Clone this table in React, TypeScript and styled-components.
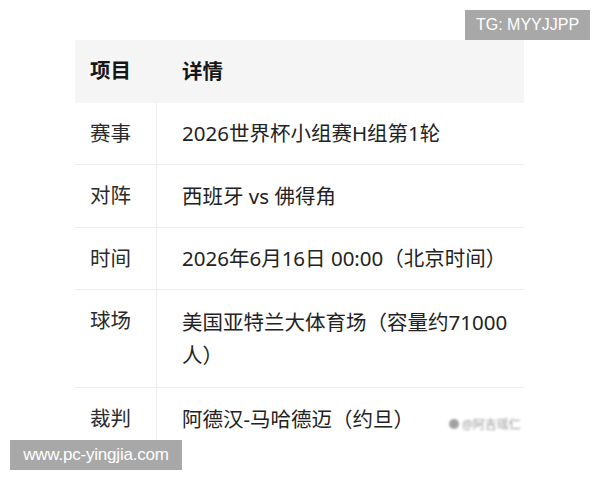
import React from 'react';
import styled, { createGlobalStyle, css } from 'styled-components';

const GlobalStyle = createGlobalStyle`
    html, body {
        margin: 0;
        padding: 0;
        background: #ffffff;
    }
    body {
        font-family: "Noto Sans", "Noto Sans CJK SC", sans-serif;
        color: #222222;
    }
`;

const Page = styled.div`
    position: relative;
    width: 600px;
    height: 480px;
    overflow: hidden;
    padding: 40px 0 0 75px;
    box-sizing: border-box;
`;

const Table = styled.div`
    width: 449px;
    display: grid;
    grid-template-columns: 82px 1fr;
`;

const Cell = styled.div<{ head?: boolean; label?: boolean }>`
    display: flex;
    align-items: center;
    box-sizing: border-box;
    min-height: 62px;
    padding: 14px 14px 14px 25px;
    font-size: 20.5px;
    line-height: 33px;
    color: #222222;
    border-bottom: 1px solid #eeeeee;

    &:nth-last-child(-n + 2) {
        border-bottom: none;
    }

    ${props =>
        props.label &&
        css`
            padding-left: 15px;
            padding-right: 0;
            align-items: flex-start;
            border-right: 1px solid #eeeeee;
            color: #2a2a2a;
        `}

    ${props =>
        props.head &&
        css`
            background: #f5f5f5;
            font-weight: 700;
            color: #161616;
            min-height: 63px;
            border-right: none;
            border-bottom: none;
        `}
`;

const Badge = styled.div<{ corner: 'top' | 'bottom' }>`
    position: absolute;
    background: #a8a8a8;
    color: #ffffff;
    font-family: "Liberation Sans", Arial, sans-serif;
    display: flex;
    align-items: center;
    justify-content: center;
    height: 30px;

    ${props =>
        props.corner === 'top'
            ? css`
                  top: 10px;
                  right: 10px;
                  width: 125px;
                  font-size: 16px;
              `
            : css`
                  left: 10px;
                  top: 440px;
                  width: 172px;
                  font-size: 17px;
                  letter-spacing: -0.2px;
              `}
`;

const Stamp = styled.div`
    position: absolute;
    left: 449px;
    top: 415px;
    display: flex;
    align-items: center;
    gap: 3px;
    font-size: 12px;
    color: #9a9a9a;
    filter: blur(0.9px);
`;

const StampDot = styled.span`
    width: 10px;
    height: 10px;
    border-radius: 50%;
    background: #a0a0a0;
`;

const rows = [
    { label: '赛事', value: '2026世界杯小组赛H组第1轮', height: 59 },
    { label: '对阵', value: '西班牙 vs 佛得角', height: 63 },
    { label: '时间', value: '2026年6月16日 00:00（北京时间）', height: 62 },
    { label: '球场', value: '美国亚特兰大体育场（容量约71000人）', height: 98 },
    { label: '裁判', value: '阿德汉-马哈德迈（约旦）', height: 62 },
];

const App = () => (
    <>
        <GlobalStyle />
        <Page>
            <Table>
                <Cell head label>
                    项目
                </Cell>
                <Cell head>详情</Cell>
                {rows.map(row => (
                    <React.Fragment key={row.label}>
                        <Cell label style={{ minHeight: row.height }}>
                            {row.label}
                        </Cell>
                        <Cell style={{ minHeight: row.height }}>{row.value}</Cell>
                    </React.Fragment>
                ))}
            </Table>
            <Stamp>
                <StampDot />
                @阿吉瑶仁
            </Stamp>
            <Badge corner="top">TG: MYYJJPP</Badge>
            <Badge corner="bottom">www.pc-yingjia.com</Badge>
        </Page>
    </>
);

export default App;
